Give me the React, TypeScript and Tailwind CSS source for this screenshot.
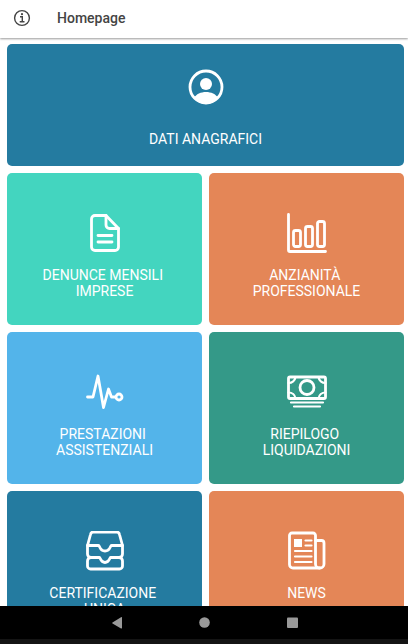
import type { ReactNode } from "react";
import clsx from "clsx";

type TileItem = {
  label: string;
  color: string;
  icon: ReactNode;
  wide?: boolean;
};

const tiles: TileItem[] = [
  {
    label: "DATI ANAGRAFICI",
    color: "bg-[#247ba0]",
    wide: true,
    icon: (
      <>
        <circle cx="20" cy="20" r="16" />
        <circle cx="20" cy="17" r="6" fill="currentColor" stroke="none" />
        <path
          d="M8 31c2-4 7-6 12-6s10 2 12 6c-3 4-7 6-12 6s-9-2-12-6z"
          fill="currentColor"
          stroke="none"
        />
      </>
    ),
  },
  {
    label: "DENUNCE MENSILI IMPRESE",
    color: "bg-[#43d5bf]",
    icon: (
      <>
        <path d="M21 2.5H10a3.5 3.5 0 0 0-3.5 3.5v28a3.5 3.5 0 0 0 3.5 3.5h20a3.5 3.5 0 0 0 3.5-3.5V15.5z" />
        <path d="M21 2.5V12a3.5 3.5 0 0 0 3.5 3.5h9" />
        <path d="M13 22.5h14M13 29h14" />
      </>
    ),
  },
  {
    label: "ANZIANITÀ PROFESSIONALE",
    color: "bg-[#e48657]",
    icon: (
      <>
        <path d="M1.5 1.5V37A1.5 1.5 0 0 0 3 38.5h35.5" />
        <rect x="6.5" y="17.5" width="7" height="16" rx="2" />
        <rect x="18.500" y="13.5" width="7" height="20" rx="2" />
        <rect x="30.500" y="8.5" width="7" height="25" rx="2" />
      </>
    ),
  },
  {
    label: "PRESTAZIONI ASSISTENZIALI",
    color: "bg-[#53b4ea]",
    icon: (
      <>
        <path d="M2.500 25h5.500L13 4l5.500 31.500 5-18.500 3 8h4" />
        <circle cx="34" cy="25" r="3" />
      </>
    ),
  },
  {
    label: "RIEPILOGO LIQUIDAZIONI",
    color: "bg-[#349988]",
    icon: (
      <>
        <rect x="1.5" y="5" width="37" height="21.5" rx="1.5" />
        <circle cx="20" cy="15.5" r="7" />
        <path
          d="M8.500 5a7 7 0 0 1-7 6M31.500 5a7 7 0 0 0 7 6M8.500 26.500a7 7 0 0 0-7-6M31.500 26.500a7 7 0 0 1 7-6"
          strokeWidth="2.200"
        />
        <path d="M4 30.500h32M7 34.500h26" strokeWidth="2.200" />
      </>
    ),
  },
  {
    label: "CERTIFICAZIONE UNICA",
    color: "bg-[#247ba0]",
    icon: (
      <>
        <path d="M2.500 14.500L5.500 3.500A3 3 0 0 1 8.500 1h23a3 3 0 0 1 3 2.500l3 11V23a3.500 3.500 0 0 1-3.500 3.500A3.500 3.500 0 0 1 37.500 30v5a3 3 0 0 1-3 3h-29a3 3 0 0 1-3-3v-5A3.500 3.500 0 0 1 6 26.500 3.500 3.500 0 0 1 2.500 23z" />
        <path d="M2.500 14.500h11c1.500 0 1 5.500 6.500 5.500s5-5.500 6.500-5.500h11" />
        <path d="M4 26.500h10.500c1 0 1 5 5.500 5s4.500-5 5.500-5H36" />
      </>
    ),
  },
  {
    label: "NEWS",
    color: "bg-[#e48657]",
    icon: (
      <>
        <path d="M28.500 9.500V4.500A2.500 2.500 0 0 0 26 2H5a2.500 2.500 0 0 0-2.500 2.500v29A3.500 3.500 0 0 0 6 37h27a4 4 0 0 0 4-4V12a2.500 2.500 0 0 0-2.500-2.500z" />
        <path d="M28.500 9.500V33a4 4 0 0 0 4 4" />
        <rect x="7" y="8" width="8" height="8" fill="currentColor" stroke="none" />
        <path
          d="M18.500 9.500h6M18.500 14.500h6M8 20h16.500M8 25.500h16.500M8 31h16.500"
          strokeWidth="2.200"
        />
      </>
    ),
  },
];

function Header() {
  return (
    <header className="z-10 flex h-[38px] shrink-0 items-center gap-[26px] bg-white pb-[2px] pl-[13px] text-[#444444] shadow-[0_1px_2px_rgba(0,0,0,0.4)]">
      <button type="button" aria-label="Informazioni">
        <svg
          className="block size-[18px]"
          viewBox="0 0 18 18"
          fill="none"
          stroke="currentColor"
          strokeWidth="1.400"
        >
          <circle cx="9" cy="9" r="7.400" />
          <path d="M7 7.700h2.300v5M6.700 12.700h4.800" />
          <circle cx="9" cy="5.200" r="1.100" fill="currentColor" stroke="none" />
        </svg>
      </button>
      <h1 className="text-sm font-medium">Homepage</h1>
    </header>
  );
}

function Tile({ label, color, icon, wide }: TileItem) {
  return (
    <button
      type="button"
      className={clsx(
        "flex flex-col items-center rounded-[5px] px-6 text-sm leading-4 text-white",
        color,
        wide ? "col-span-2 h-[122px] gap-6 pt-[23px]" : "h-[152px] gap-[14px] pt-10"
      )}
    >
      <svg
        className="size-10 shrink-0"
        viewBox="0 0 40 40"
        fill="none"
        stroke="currentColor"
        strokeWidth="2.800"
        strokeLinecap="round"
        strokeLinejoin="round"
        aria-hidden="true"
      >
        {icon}
      </svg>
      <span className="whitespace-break-spaces">{label}</span>
    </button>
  );
}

function SystemBar() {
  return (
    <nav className="flex h-[38px] shrink-0 items-center justify-center gap-[70px] border-b-[5px] border-[#141414] bg-black text-[#999999]">
      <button type="button" aria-label="Indietro">
        <svg className="block size-[18px]" viewBox="0 0 18 18" fill="currentColor">
          <path d="M15 4v10a.6.6 0 0 1-1 .4L5.500 9.500a.6.6 0 0 1 0-1L14 3.300a.6.6 0 0 1 1 .7z" />
        </svg>
      </button>
      <button type="button" aria-label="Home">
        <svg className="block size-[18px]" viewBox="0 0 18 18" fill="currentColor">
          <circle cx="9.500" cy="8.500" r="5.300" />
        </svg>
      </button>
      <button type="button" aria-label="Recenti">
        <svg className="block size-[18px]" viewBox="0 0 18 18" fill="currentColor">
          <rect x="4" y="3.500" width="11" height="10.500" rx="1" />
        </svg>
      </button>
    </nav>
  );
}

export default function App() {
  return (
    <div className="flex h-screen flex-col bg-white font-['Roboto',sans-serif]">
      <Header />
      <main className="min-h-0 flex-1 overflow-hidden pt-[6px] pr-1 pl-[7px]">
        <div className="grid grid-cols-2 gap-[7px]">
          {tiles.map((tile) => (
            <Tile key={tile.label} {...tile} />
          ))}
        </div>
      </main>
      <SystemBar />
    </div>
  );
}
